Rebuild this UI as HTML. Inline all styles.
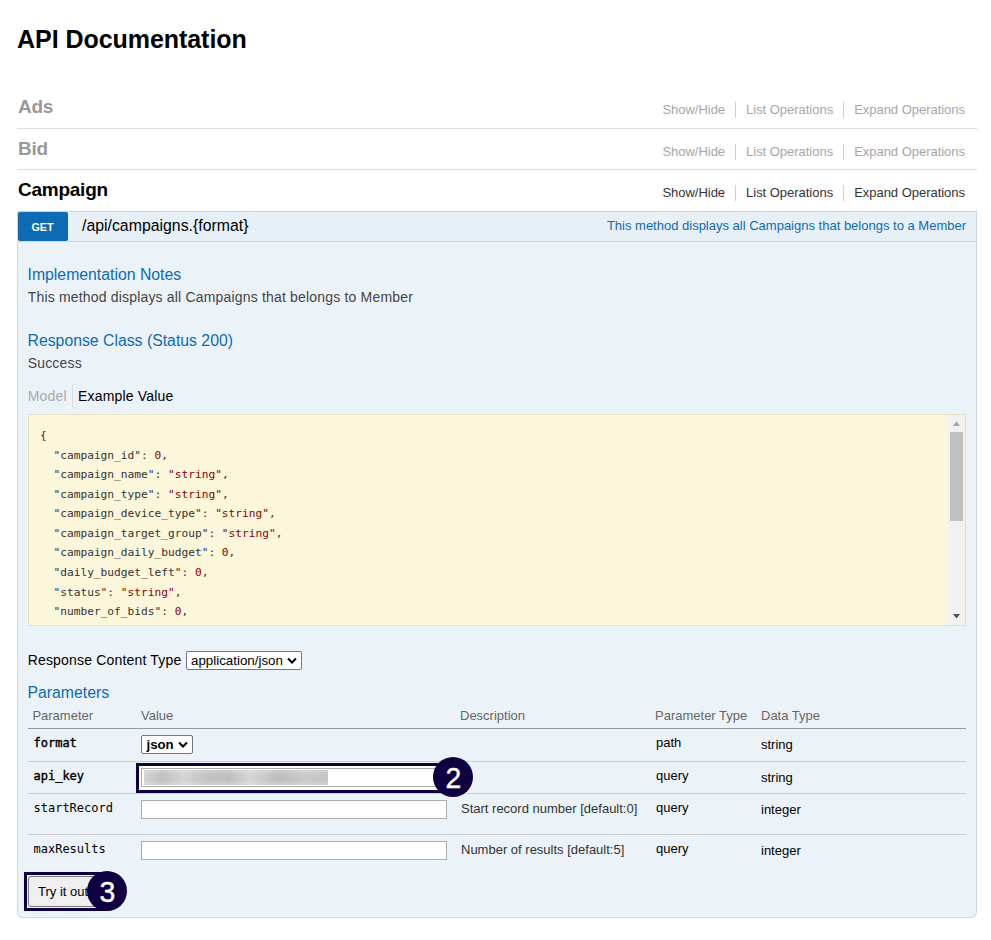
<!DOCTYPE html>
<html><head><meta charset="utf-8"><title>API Documentation</title>
<style>
html,body{margin:0;padding:0;background:#fff;}
body{width:991px;height:940px;position:relative;overflow:hidden;font-family:"Liberation Sans",Arial,sans-serif;color:#000;}
.a{position:absolute;white-space:nowrap;line-height:1;}
.h1{left:17px;top:27px;font-size:25px;font-weight:bold;letter-spacing:-0.05px;}
.res{left:18px;font-size:19px;font-weight:bold;color:#999;letter-spacing:-0.25px;}
.res.act{color:#000;}
.hr{position:absolute;left:17px;width:960px;height:1px;background:#ddd;}
.ops{right:26px;font-size:13px;color:#a6a6a6;line-height:16px;letter-spacing:-0.025px;}
.ops.act{color:#333;}
.ops span{display:inline-block;}
.ops .sep{border-left:1px solid #d0d0d0;margin-left:10px;padding-left:10px;}
.ophead{position:absolute;left:17px;top:211px;width:958px;height:29px;background:#e7f0f7;border:1px solid #c3d9ec;}
.get{position:absolute;left:18px;top:212px;width:50px;height:29px;background:#0f6ab4;color:#fff;font-size:10.8px;font-weight:bold;text-align:center;line-height:30px;border-radius:2px;padding-right:1px;width:49px;}
.path{left:82px;top:218px;font-size:15.85px;color:#000;}
.summ{right:25px;top:219px;font-size:13px;color:#0f6ab4;}
.content{position:absolute;left:17px;top:242px;width:958px;height:675px;background:#ebf3f9;border:1px solid #c3d9ec;border-top:none;border-radius:0 0 6px 6px;}
.h4{left:27.5px;font-size:15.8px;color:#0f6ab4;}
.p{left:27.7px;font-size:14px;color:#444;letter-spacing:0.18px;}
.code{position:absolute;left:28px;top:414px;width:936px;height:210px;background:#fcf6db;border:1px solid #e5e0c6;}
.code pre{margin:0;position:absolute;left:11px;top:11px;font-family:"DejaVu Sans Mono","Liberation Mono",monospace;font-size:11.2px;line-height:19.58px;color:#333;}
.code pre b{font-weight:normal;color:#800;}
.sb{position:absolute;right:0;top:0;width:17px;height:210px;background:#f1f1f1;}
.sb .thumb{position:absolute;left:2px;top:17px;width:13px;height:89px;background:#c1c1c1;}
.th{font-size:13px;color:#666;top:709px;}
.td{font-size:13px;color:#000;}
.mono{font-family:"DejaVu Sans Mono","Liberation Mono",monospace;font-size:12px;color:#000;}
.mono.b{-webkit-text-stroke:0.38px #000;}
.inp{position:absolute;left:141px;width:304px;height:17px;background:#fff;border:1px solid #aaa;}
.row{position:absolute;left:28px;width:938px;height:1px;background:#ccc;}
.sel{position:absolute;background:#fff;border:1px solid #767676;border-radius:2px;font-size:13.33px;color:#000;box-sizing:border-box;}
.hl{position:absolute;border:3px solid #0f0040;}
.badge{position:absolute;width:40px;height:40px;border-radius:50%;background:#0f0040;color:#fff;font-size:30px;text-align:center;line-height:41px;}
.badge span{display:inline-block;transform:translate(0.2px,-0.2px) scaleX(0.96);font-size:29.6px;-webkit-text-stroke:0.4px #fff;}
</style></head><body>
<div class="a h1">API Documentation</div>

<div class="a res" style="top:97px">Ads</div>
<div class="a ops" style="top:102px"><span>Show/Hide</span><span class="sep">List Operations</span><span class="sep">Expand Operations</span></div>
<div class="hr" style="top:128px"></div>

<div class="a res" style="top:139px">Bid</div>
<div class="a ops" style="top:144px"><span>Show/Hide</span><span class="sep">List Operations</span><span class="sep">Expand Operations</span></div>
<div class="hr" style="top:169px"></div>

<div class="a res act" style="top:180px">Campaign</div>
<div class="a ops act" style="top:185px"><span>Show/Hide</span><span class="sep">List Operations</span><span class="sep">Expand Operations</span></div>

<div class="ophead"></div>
<div class="get">GET</div>
<div class="a path">/api/campaigns.{format}</div>
<div class="a summ">This method displays all Campaigns that belongs to a Member</div>

<div class="content"></div>
<div class="a h4" style="top:267px">Implementation Notes</div>
<div class="a p" style="top:290px">This method displays all Campaigns that belongs to Member</div>
<div class="a h4" style="top:333px">Response Class (Status 200)</div>
<div class="a p" style="top:356px">Success</div>
<div class="a p" style="top:389px;color:#aaa">Model</div>
<div style="position:absolute;left:72px;top:384px;width:1px;height:25px;background:#ddd"></div>
<div class="a p" style="top:389px;left:78px;color:#000">Example Value</div>

<div class="code"><pre>{
  "campaign_id": <b>0</b>,
  "campaign_name": <b>"string"</b>,
  "campaign_type": <b>"string"</b>,
  "campaign_device_type": <b>"string"</b>,
  "campaign_target_group": <b>"string"</b>,
  "campaign_daily_budget": <b>0</b>,
  "daily_budget_left": <b>0</b>,
  "status": <b>"string"</b>,
  "number_of_bids": <b>0</b>,</pre>
<div class="sb"><div class="thumb"></div>
<svg style="position:absolute;left:0;top:0" width="17" height="17"><path d="M5 11 L8.5 6.5 L12 11 Z" fill="#a3a3a3"/></svg>
<svg style="position:absolute;left:0;bottom:0" width="17" height="17"><path d="M5 6 L8.5 10.5 L12 6 Z" fill="#505050"/></svg>
</div></div>

<div class="a p" style="top:653px;color:#000">Response Content Type</div>
<div class="sel" style="left:186px;top:651px;width:116px;height:19px;"><span class="a" style="left:4px;top:2px">application/json</span><svg style="position:absolute;right:4px;top:5px" width="10" height="8"><path d="M1 1.5 L5 5.5 L9 1.5" stroke="#000" stroke-width="2" fill="none"/></svg></div>

<div class="a h4" style="top:685px">Parameters</div>
<div class="a th" style="left:32.4px">Parameter</div>
<div class="a th" style="left:141px">Value</div>
<div class="a th" style="left:460px">Description</div>
<div class="a th" style="left:655px">Parameter Type</div>
<div class="a th" style="left:761px">Data Type</div>
<div class="row" style="top:728px;background:#999"></div>
<div class="row" style="top:761px"></div>
<div class="row" style="top:793px"></div>
<div class="row" style="top:834px"></div>

<div class="a mono b" style="left:33.5px;top:737px">format</div>
<div class="sel" style="left:141px;top:735px;width:52px;height:19px;font-size:13.2px;font-weight:bold"><span class="a" style="left:4.5px;top:1.5px">json</span><svg style="position:absolute;right:4px;top:5px" width="10" height="8"><path d="M1 1.5 L5 5.5 L9 1.5" stroke="#000" stroke-width="2" fill="none"/></svg></div>
<div class="a td" style="left:656px;top:736px">path</div>
<div class="a td" style="left:761px;top:738px">string</div>

<div class="a mono b" style="left:33.5px;top:770px">api_key</div>
<div class="hl" style="left:136px;top:763px;width:310px;height:24px;background:#fff"></div>
<div class="inp" style="top:768px"></div>
<div style="position:absolute;left:144px;top:770px;width:184px;height:15px;background:linear-gradient(180deg,rgba(255,255,255,.22),rgba(255,255,255,0) 40%,rgba(255,255,255,0) 60%,rgba(255,255,255,.22)),linear-gradient(90deg,#d2d2d2 0,#c0c0c0 18px,#d4d4d4 40px,#c3c3c3 60px,#bebebe 85px,#d5d5d5 106px,#bcbcbc 135px,#c9c9c9 160px,#c4c4c4 184px)"></div>
<div class="badge" style="left:433px;top:757px"><span>2</span></div>
<div class="a td" style="left:656px;top:769px">query</div>
<div class="a td" style="left:761px;top:771px">string</div>

<div class="a mono" style="left:33.5px;top:802px">startRecord</div>
<div class="inp" style="top:800px"></div>
<div class="a td" style="left:461px;top:802px;color:#333">Start record number [default:0]</div>
<div class="a td" style="left:656px;top:801px">query</div>
<div class="a td" style="left:761px;top:803px">integer</div>

<div class="a mono" style="left:33.5px;top:843px">maxResults</div>
<div class="inp" style="top:841px"></div>
<div class="a td" style="left:461px;top:843px;color:#333">Number of results [default:5]</div>
<div class="a td" style="left:656px;top:842px">query</div>
<div class="a td" style="left:761px;top:844px">integer</div>

<div class="hl" style="left:24px;top:872px;width:75px;height:33px;"></div>
<div style="position:absolute;left:28px;top:876px;width:72px;height:31px;background:#efefef;border:1px solid #767676;border-radius:3px;box-sizing:border-box"></div>
<div class="a" style="left:38px;top:885px;font-size:13px;color:#000">Try it out!</div>
<div class="badge" style="left:87px;top:870.5px"><span>3</span></div>
</body></html>
